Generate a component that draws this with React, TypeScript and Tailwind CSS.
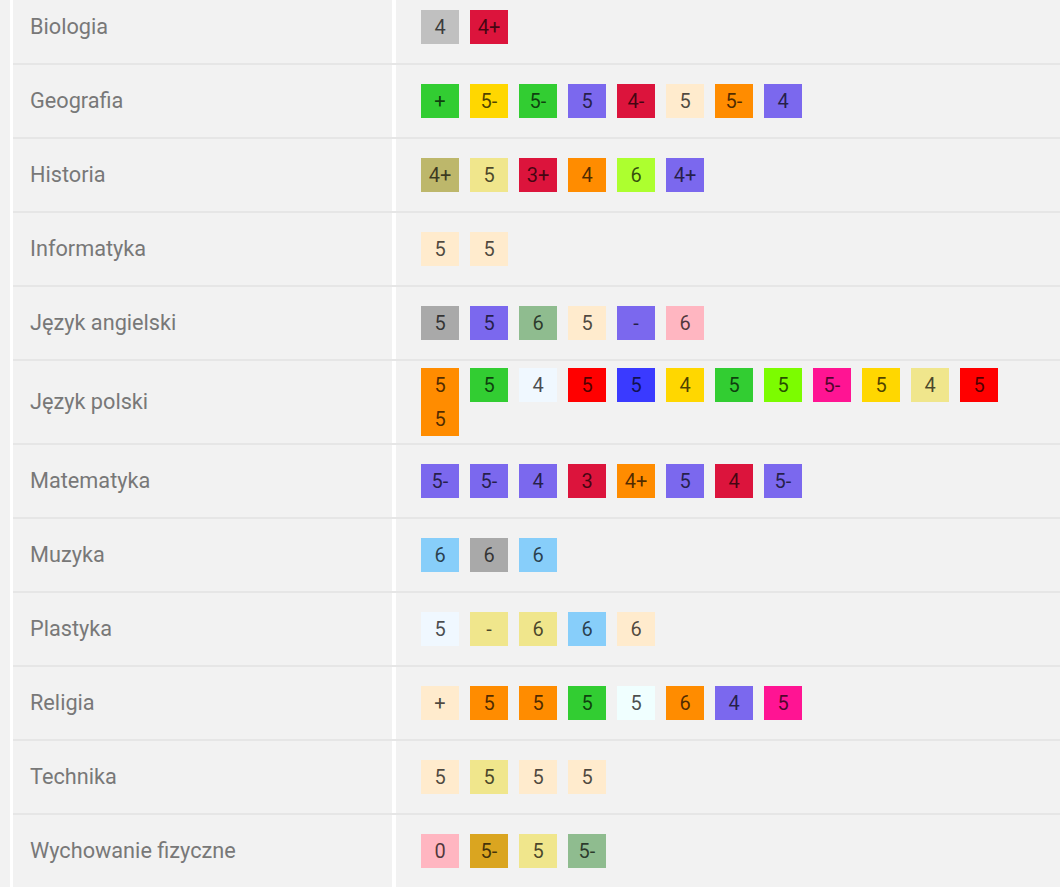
import React from "react";

const C: Record<string, string> = {
  silver: "bg-[#c0c0c0]",
  crimson: "bg-[#dc143c]",
  lime: "bg-[#32cd32]",
  gold: "bg-[#ffd700]",
  msb: "bg-[#7b68ee]",
  bda: "bg-[#ffebcd]",
  orange: "bg-[#ff8c00]",
  dkhaki: "bg-[#bdb76b]",
  khaki: "bg-[#f0e68c]",
  gyellow: "bg-[#adff2f]",
  dgray: "bg-[#a9a9a9]",
  dsg: "bg-[#8fbc8f]",
  lpink: "bg-[#ffb6c1]",
  alice: "bg-[#f0f8ff]",
  red: "bg-[#ff0000]",
  blue: "bg-[#3a3aff]",
  lawn: "bg-[#7cfc00]",
  dpink: "bg-[#ff1493]",
  lsky: "bg-[#87cefa]",
  azure: "bg-[#f0ffff]",
  goldenrod: "bg-[#daa520]",
};

type G = [string, string];

const rows: { name: string; grades: G[] }[] = [
  { name: "Biologia", grades: [["4", "silver"], ["4+", "crimson"]] },
  {
    name: "Geografia",
    grades: [["+", "lime"], ["5-", "gold"], ["5-", "lime"], ["5", "msb"], ["4-", "crimson"], ["5", "bda"], ["5-", "orange"], ["4", "msb"]],
  },
  {
    name: "Historia",
    grades: [["4+", "dkhaki"], ["5", "khaki"], ["3+", "crimson"], ["4", "orange"], ["6", "gyellow"], ["4+", "msb"]],
  },
  { name: "Informatyka", grades: [["5", "bda"], ["5", "bda"]] },
  {
    name: "Język angielski",
    grades: [["5", "dgray"], ["5", "msb"], ["6", "dsg"], ["5", "bda"], ["-", "msb"], ["6", "lpink"]],
  },
  {
    name: "Język polski",
    grades: [["5", "orange"], ["5", "lime"], ["4", "alice"], ["5", "red"], ["5", "blue"], ["4", "gold"], ["5", "lime"], ["5", "lawn"], ["5-", "dpink"], ["5", "gold"], ["4", "khaki"], ["5", "red"], ["5", "orange"]],
  },
  {
    name: "Matematyka",
    grades: [["5-", "msb"], ["5-", "msb"], ["4", "msb"], ["3", "crimson"], ["4+", "orange"], ["5", "msb"], ["4", "crimson"], ["5-", "msb"]],
  },
  { name: "Muzyka", grades: [["6", "lsky"], ["6", "dgray"], ["6", "lsky"]] },
  {
    name: "Plastyka",
    grades: [["5", "alice"], ["-", "khaki"], ["6", "khaki"], ["6", "lsky"], ["6", "bda"]],
  },
  {
    name: "Religia",
    grades: [["+", "bda"], ["5", "orange"], ["5", "orange"], ["5", "lime"], ["5", "azure"], ["6", "orange"], ["4", "msb"], ["5", "dpink"]],
  },
  { name: "Technika", grades: [["5", "bda"], ["5", "khaki"], ["5", "bda"], ["5", "bda"]] },
  {
    name: "Wychowanie fizyczne",
    grades: [["0", "lpink"], ["5-", "goldenrod"], ["5", "khaki"], ["5-", "dsg"]],
  },
];

export default function App() {
  return (
    <div
      className="w-[1060px] h-[887px] overflow-hidden bg-[#f2f2f2]"
      style={{ fontFamily: "Roboto, 'Noto Sans', sans-serif" }}
    >
      <div className="-mt-[9px] flex">
        <div className="w-[10px] shrink-0" />
        <div className="w-[3px] shrink-0 bg-white" />
        <div className="flex-1 flex flex-col">
          {rows.map((r) => (
            <div key={r.name} className="flex border-b-2 border-[#e6e6e6] min-h-[74px]">
              <div className="w-[379px] shrink-0 flex items-center pl-[17px] text-[21.7px] text-[#787878]">
                {r.name}
              </div>
              <div className="w-[4px] shrink-0 bg-white" />
              <div className="flex-1 flex items-center pl-[25px] pr-[30px] py-[7px]">
                <div className="flex flex-wrap gap-x-[11px]">
                  {r.grades.map((g, i) => (
                    <span
                      key={i}
                      className={`w-[38px] h-[34px] flex items-center justify-center text-[20px] text-black/70 ${C[g[1]]}`}
                    >
                      {g[0]}
                    </span>
                  ))}
                </div>
              </div>
            </div>
          ))}
        </div>
      </div>
    </div>
  );
}
